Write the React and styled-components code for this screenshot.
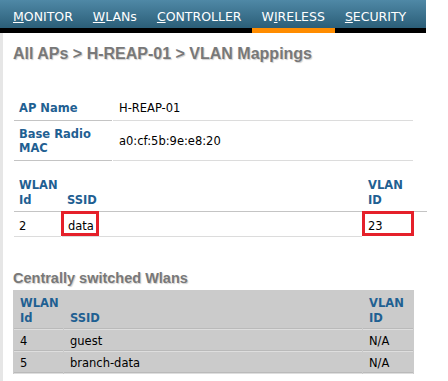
import React from "react";
import styled, { createGlobalStyle } from "styled-components";

const GlobalStyle = createGlobalStyle`
  html, body { margin: 0; padding: 0; background: #fff; }
  body { font-family: "DejaVu Sans", Verdana, sans-serif; color: #000; }
  *, *::before, *::after { box-sizing: border-box; }
`;

const NavBar = styled.nav`
  display: flex;
  width: 426px;
  height: 33px;
  padding-left: 3px;
  overflow: hidden;
  background: linear-gradient(#4f88a6, #2b5e78) 0 0 / 100% 28px no-repeat, #000;
`;

const NavItem = styled.div`
  flex-shrink: 0;
  white-space: nowrap;
  padding: 8px 10px 2px;
  height: 33px;
  font-family: "DejaVu Sans", Tahoma, sans-serif;
  font-size: 12.5px;
  line-height: 18px;
  color: #fff;
  border-bottom: 5px solid ${(p) => (p.$active ? "#ff8c00" : "transparent")};
`;

const Key = styled.span`
  text-decoration: underline;
`;

const Content = styled.main`
  border-left: 3px solid #e6e6e6;
  padding: 12px 0 0 10px;
  min-height: calc(100vh - 33px);
`;

const Title = styled.h1`
  margin: 0;
  font-family: "Liberation Sans", Arial, sans-serif;
  font-weight: bold;
  font-size: ${(p) => p.$size}px;
  line-height: ${(p) => p.$lh}px;
  color: #787878;
  text-shadow: 1px 1px 1px #cfcfcf;
`;

const SubTitle = styled(Title)`
  margin: 33px 0 3px;
`;

const Table = styled.table`
  border-collapse: separate;
  border-spacing: 1px 0;
  table-layout: fixed;
  width: ${(p) => p.$w}px;
  margin-top: ${(p) => p.$mt || 0}px;
  font-size: 11.5px;
  line-height: ${(p) => p.$lh}px;
  background: ${(p) => p.$bg || "transparent"};
`;

const Label = styled.th`
  text-align: left;
  vertical-align: ${(p) => p.$va || "top"};
  font-weight: bold;
  color: #1f6092;
  width: ${(p) => (p.$w ? `${p.$w}px` : "auto")};
  padding: ${(p) => p.$pad || "6px 5px 5px"};
  border-bottom: 1px solid #c4c4c4;
`;

const Value = styled.td`
  position: relative;
  vertical-align: middle;
  padding: ${(p) => p.$pad || "6px 6px 5px"};
  border-bottom: 1px solid ${(p) => (p.$noLine ? "transparent" : "#dcdcdc")};
`;

const GrayHead = styled.th`
  text-align: left;
  vertical-align: bottom;
  font-weight: bold;
  color: #1f6092;
  width: ${(p) => (p.$w ? `${p.$w}px` : "auto")};
  padding: 6px 6px 3px;
  border-bottom: 1px solid #dedede;
  box-shadow: inset 0 -1px 0 #bababa;
`;

const GrayCell = styled.td`
  padding: 4px 6px 2px;
  border-bottom: 1px solid #dedede;
  box-shadow: inset 0 -1px 0 #bababa;
`;

const Mark = styled.span`
  position: absolute;
  top: -1px;
  bottom: 0;
  left: -1px;
  width: ${(p) => p.$w}px;
  border: 3px solid #e5202a;
  pointer-events: none;
`;

const navItems = [
  { pre: "", key: "M", post: "ONITOR" },
  { pre: "", key: "W", post: "LANs" },
  { pre: "", key: "C", post: "ONTROLLER" },
  { pre: "W", key: "I", post: "RELESS", active: true },
  { pre: "", key: "S", post: "ECURITY" },
];

const central = [
  { id: "4", ssid: "guest", vlan: "N/A" },
  { id: "5", ssid: "branch-data", vlan: "N/A" },
];

export default function App() {
  return (
    <>
      <GlobalStyle />
      <NavBar>
        {navItems.map((n, i) => (
          <NavItem key={i} $active={n.active}>
            {n.pre}
            <Key>{n.key}</Key>
            {n.post}
          </NavItem>
        ))}
      </NavBar>
      <Content>
        <Title $size={16} $lh={18}>
          All APs &gt; H-REAP-01 &gt; VLAN Mappings
        </Title>

        <Table $w={401} $mt={32} $lh={14}>
          <tbody>
            <tr>
              <Label $w={98}>AP Name</Label>
              <Value>H-REAP-01</Value>
            </tr>
            <tr>
              <Label>
                Base Radio
                <br />
                MAC
              </Label>
              <Value>a0:cf:5b:9e:e8:20</Value>
            </tr>
          </tbody>
        </Table>

        <Table $w={415} $mt={12} $lh={15}>
          <thead>
            <tr>
              <Label $w={47} $va="bottom" $pad="5px 5px 3px">
                WLAN
                <br />
                Id
              </Label>
              <Label $va="bottom" $pad="5px 5px 3px">
                SSID
              </Label>
              <Label $w={64} $va="bottom" $pad="5px 5px 3px">
                VLAN
                <br />
                ID
              </Label>
            </tr>
          </thead>
          <tbody>
            <tr>
              <Value $pad="7px 5px 2px">2</Value>
              <Value $pad="7px 5px 2px 6px">
                data
                <Mark $w={38} />
              </Value>
              <Value $pad="7px 5px 2px" $noLine>
                23
                <Mark $w={52} />
              </Value>
            </tr>
          </tbody>
        </Table>

        <SubTitle $size={14.5} $lh={17}>
          Centrally switched Wlans
        </SubTitle>

        <Table $w={401} $lh={15} $bg="#cbcbcb">
          <thead>
            <tr>
              <GrayHead $w={49}>
                WLAN
                <br />
                Id
              </GrayHead>
              <GrayHead>SSID</GrayHead>
              <GrayHead $w={50}>
                VLAN
                <br />
                ID
              </GrayHead>
            </tr>
          </thead>
          <tbody>
            {central.map((r) => (
              <tr key={r.id}>
                <GrayCell>{r.id}</GrayCell>
                <GrayCell>{r.ssid}</GrayCell>
                <GrayCell>{r.vlan}</GrayCell>
              </tr>
            ))}
          </tbody>
        </Table>
      </Content>
    </>
  );
}
